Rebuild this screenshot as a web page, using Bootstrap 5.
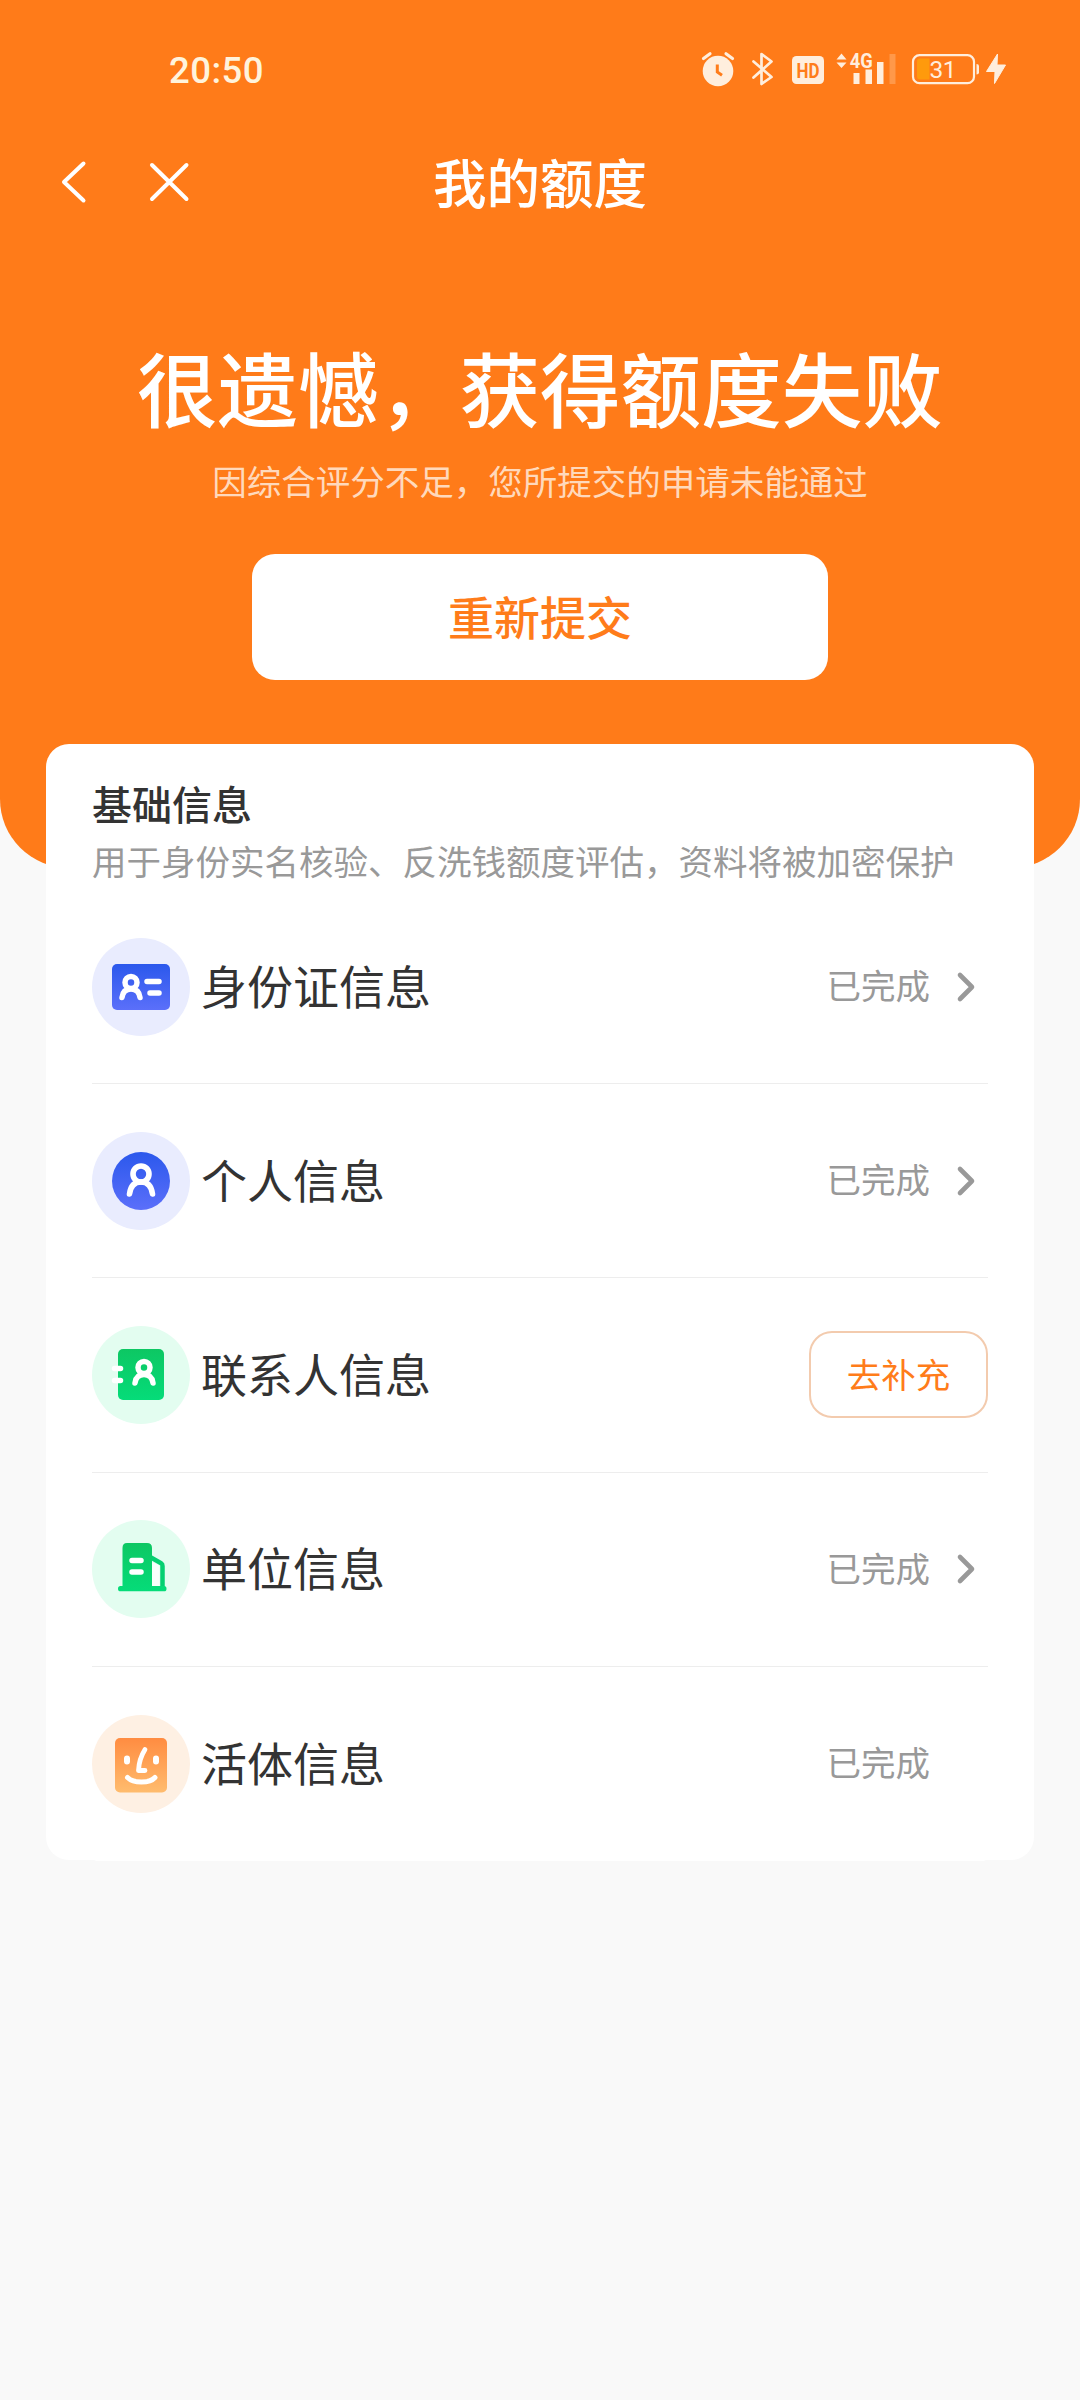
<!DOCTYPE html>
<html lang="zh-CN">
<head>
<meta charset="utf-8">
<meta name="viewport" content="width=device-width, initial-scale=1">
<title>我的额度</title>
<link href="https://cdn.jsdelivr.net/npm/bootstrap@5.3.0/dist/css/bootstrap.min.css" rel="stylesheet">
<style>
  body { background: #f9f9f9; color: #333; font-family: "Noto Sans CJK SC", sans-serif; min-height: 2400px; }
  svg { display: block; flex: none; }
  .hero { height: 868px; background: #ff7b19; border-radius: 0 0 69px 69px; color: #fff; }
  .status-bar { height: 138px; padding: 0 73px 0 169px; }
  .clock { font: 500 36.5px/138px Roboto, sans-serif; letter-spacing: .5px; color: #fff3dc; padding-top: 3px; }
  .title-bar { height: 90px; padding: 0 60px; }
  .title-bar h1 { font-size: 53.5px; line-height: 86px; padding-bottom: 4px; font-weight: 500; }
  .side { width: 130px; height: 90px; }
  .headline { font-size: 80.6px; line-height: 100px; font-weight: 500; margin-top: 108px; white-space: nowrap; }
  .reason { font-size: 34.5px; line-height: 50px; color: #ffd9bc; margin-top: 19px; }
  .btn-resubmit { --bs-btn-color: #ff7c1a; --bs-btn-bg: #fff; --bs-btn-hover-bg: #fff5ee; --bs-btn-hover-color: #ff7c1a;
    width: 576px; height: 126px; margin-top: 49px; padding: 0 0 4px; border: 0; border-radius: 23px; font-size: 46px; font-weight: 500; }
  .info-card { margin: -124px 46px 0; padding: 0 46px; border: 0; border-radius: 23px; height: 1116px; }
  .info-card h2 { font-size: 40px; line-height: 50px; font-weight: 500; margin: 34px 0 0; color: #333; }
  .note { font-size: 34.5px; line-height: 50px; color: #999; margin: 7px 0 0; white-space: nowrap; }
  .info-list { margin-top: 5px; --bs-list-group-border-color: #ededed; --bs-list-group-color: #333; }
  .info-list .list-group-item { height: 194.2px; padding: 0; }
  .label { font-size: 46px; line-height: 60px; margin-left: 11px; padding-bottom: 6px; }
  .state { font-size: 34.5px; line-height: 50px; color: #999; padding-bottom: 5px; }
  .chev { width: 58px; }
  .btn-fill { --bs-btn-color: #ff7c1a; --bs-btn-border-color: #f3cbae; --bs-btn-hover-bg: #fff5ee; --bs-btn-hover-color: #ff7c1a;
    width: 179px; height: 87px; padding: 0 0 3px; border-width: 2px; border-radius: 23px; font-size: 34.5px; }
</style>
</head>
<body>
<header class="hero d-flex flex-column">
  <div class="status-bar d-flex align-items-center justify-content-between">
    <span class="clock">20:50</span>
    <div class="d-flex align-items-center" style="color:#ffeedd">
      <svg width="34" height="36" viewBox="701 51 34 36" fill="none" stroke="currentColor"><circle cx="718" cy="71" r="15.300" fill="currentColor" stroke="none"/><path d="M703.500 58.500l6.500-4.800M732.500 58.500l-6.500-4.800" stroke-width="3.200" stroke-linecap="round"/><path d="M717.300 64.500v7.500l4.700 3.200" stroke="#ff7c1a" stroke-width="3"/></svg>
      <svg class="ms-3" width="24" height="36" viewBox="751 51 24 36" fill="none" stroke="currentColor" stroke-width="2.700" stroke-linejoin="round" stroke-linecap="round"><path d="M753.500 61.500L771.500 77 761.500 84V54L771.500 61.500 753.500 77.500"/></svg>
      <svg class="ms-3" width="34" height="36" viewBox="791 51 34 36"><rect x="792" y="56" width="32" height="28" rx="4.500" fill="currentColor"/><text x="808" y="77.800" text-anchor="middle" font-family="Roboto, sans-serif" font-weight="700" font-size="21" textLength="23" lengthAdjust="spacingAndGlyphs" fill="#ff7c1a">HD</text></svg>
      <svg style="margin-left:11px" width="62" height="48" viewBox="836 45 62 48" fill="currentColor"><path d="M836.500 59.500l5-6 5 6zM836.500 62.500l5 5.500 5-5.500z"/><path d="M853.500 73h6v11h-6zM865.500 69.500h6.500V84h-6.500zM877 62h6.500v22H877z"/><path d="M889.500 54h6v30h-6z" opacity=".25"/><text x="849.800" y="67.500" font-family="Roboto, sans-serif" font-weight="700" font-size="20" textLength="23" lengthAdjust="spacingAndGlyphs">4G</text></svg>
      <svg style="margin-left:13px" width="68" height="36" viewBox="911 51 68 36"><rect x="913" y="55.200" width="61" height="28" rx="6.500" fill="none" stroke="currentColor" stroke-width="2.200"/><path d="M920 58.500h9.500v21H920q-3 0-3-3v-15q0-3 3-3z" fill="#ff9a0c"/><path d="M976.500 64q2.500 0 2.500 2v6.500q0 2-2.500 2z" fill="currentColor"/><text x="943" y="77.800" text-anchor="middle" font-family="Roboto, sans-serif" font-size="24.500" textLength="27" fill="currentColor">31</text></svg>
      <svg style="margin-left:7px" width="21" height="36" viewBox="986 51 21 36" fill="currentColor" stroke="currentColor" stroke-linejoin="round"><path d="M997.500 54L986.500 71.500h8.500l-.5 12L1005.500 65h-8.500z"/></svg>
    </div>
  </div>
  <nav class="title-bar d-flex align-items-center justify-content-between">
    <div class="side"><svg width="130" height="90" viewBox="60 138 130 90" fill="none" stroke="#fff" stroke-width="4" stroke-linecap="round" stroke-linejoin="round"><path d="M83.500 163.500L64 182 83.500 200.500M152 165l34.500 34M186.500 165l-34.500 34"/></svg></div>
    <h1 class="m-0">我的额度</h1>
    <div class="side"></div>
  </nav>
  <h2 class="headline mb-0 text-center">很遗憾，获得额度失败</h2>
  <p class="reason mb-0 text-center">因综合评分不足，您所提交的申请未能通过</p>
  <button class="btn btn-resubmit mx-auto" type="button">重新提交</button>
</header>
<main class="card info-card">
  <h2>基础信息</h2>
  <p class="note">用于身份实名核验、反洗钱额度评估，资料将被加密保护</p>
  <ul class="list-group list-group-flush info-list">
    <li class="list-group-item d-flex align-items-center">
      <svg width="98" height="98" viewBox="0 0 98 98"><defs><linearGradient id="blue" x2="0" y2="1"><stop stop-color="#2b58ec"/><stop offset="1" stop-color="#5b6ffa"/></linearGradient><linearGradient id="green" x2="0" y2="1"><stop stop-color="#0dc763"/><stop offset="1" stop-color="#05dc79"/></linearGradient><linearGradient id="amber" x2="0" y2="1"><stop stop-color="#ff8c41"/><stop offset="1" stop-color="#ffbc6e"/></linearGradient></defs><circle cx="49" cy="49" r="49" fill="#e9ecfe"/><rect x="20" y="26" width="58" height="46" rx="5" fill="url(#blue)"/><g fill="none" stroke="#fff" stroke-width="5.500" stroke-linecap="round"><circle cx="39" cy="44.500" r="6"/><path d="M30 59.500q1-8.500 9-8.500t9 8.500"/><path d="M55 43.500h12M58 55h9"/></g></svg>
      <span class="label flex-grow-1">身份证信息</span><span class="state">已完成</span>
      <svg class="chev" height="34" viewBox="-1 0 58 34" fill="none" stroke="#999" stroke-width="4.600" stroke-linecap="round" stroke-linejoin="round"><path d="M29 5L41 17 29 29"/></svg>
    </li>
    <li class="list-group-item d-flex align-items-center">
      <svg width="98" height="98" viewBox="0 0 98 98"><circle cx="49" cy="49" r="49" fill="#e9ecfe"/><circle cx="49" cy="49" r="29" fill="url(#blue)"/><g fill="none" stroke="#fff" stroke-width="5.600" stroke-linecap="round"><circle cx="49" cy="42" r="8"/><path d="M37.500 62q1.500-12 11.500-12t11.500 12"/></g></svg>
      <span class="label flex-grow-1">个人信息</span><span class="state">已完成</span>
      <svg class="chev" height="34" viewBox="-1 0 58 34" fill="none" stroke="#999" stroke-width="4.600" stroke-linecap="round" stroke-linejoin="round"><path d="M29 5L41 17 29 29"/></svg>
    </li>
    <li class="list-group-item d-flex align-items-center">
      <svg width="98" height="98" viewBox="0 0 98 98"><circle cx="49" cy="49" r="49" fill="#e3fdf0"/><rect x="26" y="23" width="46" height="51" rx="5" fill="url(#green)"/><g fill="none" stroke="#fff" stroke-width="5.500" stroke-linecap="round"><circle cx="52" cy="41.500" r="6"/><path d="M43 57q1-8.500 9-8.500t9 8.500"/><path d="M22.500 42.500h6M22.500 54.500h6"/></g></svg>
      <span class="label flex-grow-1">联系人信息</span>
      <button class="btn btn-fill" type="button">去补充</button>
    </li>
    <li class="list-group-item d-flex align-items-center">
      <svg width="98" height="98" viewBox="0 0 98 98"><circle cx="49" cy="49" r="49" fill="#e3fdf0"/><path d="M60 42l7.500 3.500V66H60z" fill="#fff" opacity=".75"/><path d="M59 37.500L69.500 43.500Q70.500 44 70.500 46V68" fill="none" stroke="#05d071" stroke-width="4.500"/><path d="M35 23h20q5 0 5 5v38h12q2.500 0 2.500 2.700t-2.500 2.600H28.500q-2.500 0-2.500-2.600t2.500-2.700H30.500V28q0-5 4.500-5z" fill="url(#green)"/><path d="M40 40.500h9M40 52h9" stroke="#fff" stroke-width="5.500" stroke-linecap="round"/></svg>
      <span class="label flex-grow-1">单位信息</span><span class="state">已完成</span>
      <svg class="chev" height="34" viewBox="-1 0 58 34" fill="none" stroke="#999" stroke-width="4.600" stroke-linecap="round" stroke-linejoin="round"><path d="M29 5L41 17 29 29"/></svg>
    </li>
    <li class="list-group-item d-flex align-items-center">
      <svg width="98" height="98" viewBox="0 0 98 98"><circle cx="49" cy="49" r="49" fill="#fef0e3"/><rect x="23" y="23" width="52" height="54.500" rx="5" fill="url(#amber)"/><g fill="none" stroke="#fff" stroke-linecap="round" stroke-linejoin="round"><path d="M35 43.500v3M64 43.500v3" stroke-width="6"/><path d="M53 34.500Q47 44 46.500 55.500h6.500" stroke-width="4.800"/><path d="M35.500 62.500Q40 67 49.500 67T63 62.500" stroke-width="5"/></g></svg>
      <span class="label flex-grow-1">活体信息</span><span class="state">已完成</span><span class="chev"></span>
    </li>
  </ul>
</main>
<script src="https://cdn.jsdelivr.net/npm/bootstrap@5.3.0/dist/js/bootstrap.bundle.min.js"></script>
</body>
</html>
